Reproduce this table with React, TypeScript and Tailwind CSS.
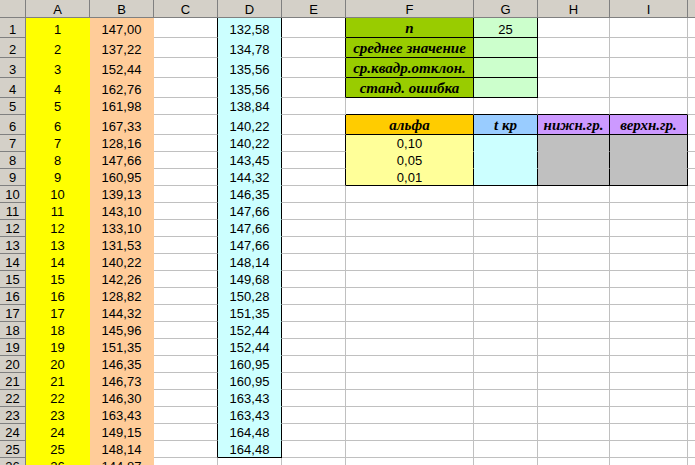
import React from "react";

const colLetters = ["A", "B", "C", "D", "E", "F", "G", "H", "I", "J"];

const bVals = [
  "147,00", "137,22", "152,44", "162,76", "161,98", "167,33", "128,16", "147,66", "160,95",
  "139,13", "143,10", "133,10", "131,53", "140,22", "142,26", "128,82", "144,32", "145,96",
  "151,35", "146,35", "146,73", "146,30", "163,43", "149,15", "148,14", "144,87",
];

const dVals = [
  "132,58", "134,78", "135,56", "135,56", "138,84", "140,22", "140,22", "143,45", "144,32",
  "146,35", "147,66", "147,66", "147,66", "148,14", "149,68", "150,28", "151,35", "152,44",
  "152,44", "160,95", "160,95", "163,43", "163,43", "164,48", "164,48",
];

const label =
  "[font-family:'Liberation_Serif',serif] italic font-bold text-[15px] leading-[15px] pb-px";

const labels: Record<string, string> = {
  "1F": "n",
  "2F": "среднее значение",
  "3F": "ср.квадр.отклон.",
  "4F": "станд. ошибка",
  "6F": "альфа",
  "6G": "t кр",
  "6H": "нижн.гр.",
  "6I": "верхн.гр.",
};

const values: Record<string, string> = {
  "1G": "25",
  "7F": "0,10",
  "8F": "0,05",
  "9F": "0,01",
};

// bg, right border, bottom border for a data cell
function cellStyle(r: number, c: string): string {
  const grid = "bg-white border-r-[#c0c0c0] border-b-[#c0c0c0]";
  const inTop = r >= 1 && r <= 4;
  const inTable = r >= 6 && r <= 9;
  switch (c) {
    case "A":
      return "bg-[#ffff00] border-r-transparent border-b-transparent";
    case "B":
      return "bg-[#ffcc99] border-r-transparent border-b-transparent";
    case "C":
      return r <= 25 ? "bg-white border-r-black border-b-[#c0c0c0]" : grid;
    case "D":
      if (r > 25) return grid;
      return r === 25
        ? "bg-[#ccffff] border-r-black border-b-black"
        : "bg-[#ccffff] border-r-black border-b-transparent";
    case "E":
      return inTop || inTable ? "bg-white border-r-black border-b-[#c0c0c0]" : grid;
    case "F":
      if (inTop) return "bg-[#99cc00] border-r-black border-b-black";
      if (r === 5) return "bg-white border-r-[#c0c0c0] border-b-black";
      if (r === 6) return "bg-[#ffcc00] border-r-black border-b-black";
      if (r === 9) return "bg-[#ffff99] border-r-black border-b-black";
      if (inTable) return "bg-[#ffff99] border-r-black border-b-transparent";
      return grid;
    case "G":
      if (inTop) return "bg-[#ccffcc] border-r-black border-b-black";
      if (r === 5) return "bg-white border-r-[#c0c0c0] border-b-black";
      if (r === 6) return "bg-[#99ccff] border-r-black border-b-black";
      if (r === 9) return "bg-[#ccffff] border-r-black border-b-black";
      if (inTable) return "bg-[#ccffff] border-r-black border-b-transparent";
      return grid;
    case "H":
    case "I":
      if (r === 5) return "bg-white border-r-[#c0c0c0] border-b-black";
      if (r === 6) return "bg-[#cc99ff] border-r-black border-b-black";
      if (r === 9) return "bg-[#c0c0c0] border-r-black border-b-black";
      if (inTable) return "bg-[#c0c0c0] border-r-black border-b-transparent";
      return grid;
    default:
      return grid;
  }
}

function cellText(r: number, c: string): React.ReactNode {
  const key = `${r}${c}`;
  if (labels[key]) return <span className={label}>{labels[key]}</span>;
  if (values[key]) return values[key];
  if (c === "A") return String(r);
  if (c === "B") return bVals[r - 1];
  if (c === "D" && r <= 25) return dVals[r - 1];
  return null;
}

const rows = Array.from({ length: 26 }, (_, i) => i + 1);

export default function App() {
  return (
    <div className="w-[695px] h-[465px] overflow-hidden bg-white font-['Liberation_Sans'] text-[13px] leading-[15px] text-black">
      <div className="grid grid-cols-[26px_64px_64px_64px_64px_64px_128px_64px_72px_78px_64px] grid-rows-[18px_20px_20px_20px_20px_17px_20px_repeat(20,17px)]">
        {/* column headers */}
        <div className="bg-[#d4d0c8] border-r border-b border-[#808080]" />
        {colLetters.map((l) => (
          <div
            key={l}
            className="flex items-end justify-center bg-[#d4d0c8] border-r border-b border-[#808080]"
          >
            {l}
          </div>
        ))}

        {rows.map((r) => (
          <React.Fragment key={r}>
            <div className="flex items-end justify-center bg-[#d4d0c8] border-r border-b border-[#808080]">
              {r}
            </div>
            {colLetters.map((c) => (
              <div
                key={c}
                className={`flex items-end justify-center overflow-hidden whitespace-nowrap border-r border-b ${cellStyle(r, c)}`}
              >
                {cellText(r, c)}
              </div>
            ))}
          </React.Fragment>
        ))}
      </div>
    </div>
  );
}
